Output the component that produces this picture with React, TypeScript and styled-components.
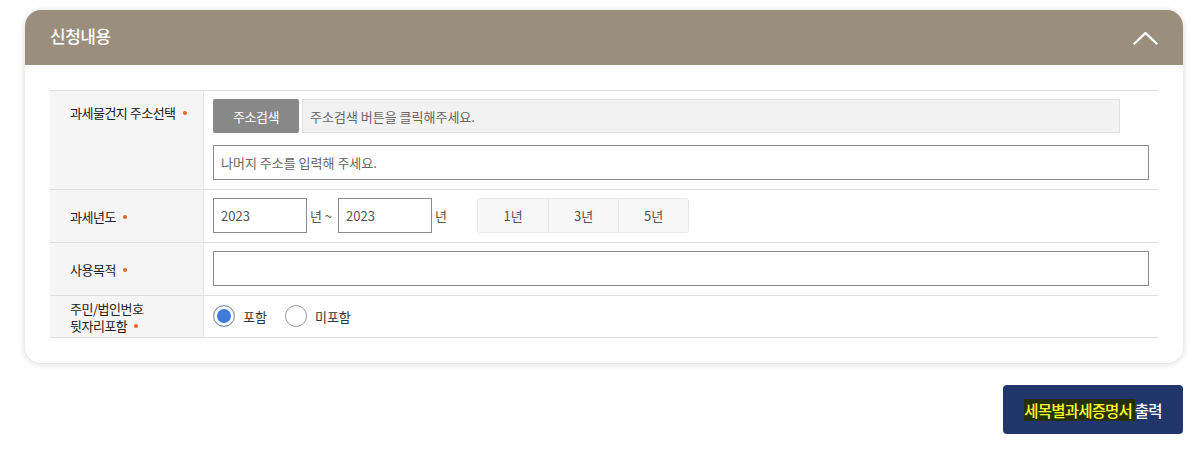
import React from "react";
import styled, { createGlobalStyle } from "styled-components";

const Global = createGlobalStyle`
  html, body { margin: 0; padding: 0; background: #fff; }
  body { font-family: "Noto Sans CJK KR", "Noto Sans", sans-serif; color: #333; }
  * { box-sizing: border-box; }
`;

const Page = styled.div`
  width: 1197px;
  padding: 10px 14px 0 25px;
  display: flex;
  flex-direction: column;
`;

const Card = styled.section`
  background: #fff;
  border-radius: 16px;
  box-shadow: 0 1px 6px rgba(0, 0, 0, 0.16);
  overflow: hidden;
`;

const Header = styled.header`
  height: 55px;
  background: #9a8f7d;
  display: flex;
  align-items: center;
  justify-content: space-between;
  padding: 0 25px 0 25px;
`;

const Title = styled.h2`
  margin: 0 0 4px 0;
  font-size: 17px;
  font-weight: 500;
  color: #fff;
  letter-spacing: -0.5px;
`;

const Body = styled.div`
  padding: 25px;
`;

const Table = styled.div`
  border-bottom: 1px solid #dedede;
`;

const Row = styled.div<{ $h: number }>`
  display: grid;
  grid-template-columns: 154px 1fr;
  height: ${(p) => p.$h}px;
  border-top: 1px solid #dedede;
`;

const Label = styled.div<{ $top?: boolean }>`
  background: #f5f5f5;
  border-right: 1px solid #e6e6e6;
  padding: ${(p) => (p.$top ? "13px 10px 0 20px" : "0 10px 0 20px")};
  display: flex;
  align-items: ${(p) => (p.$top ? "flex-start" : "center")};
  font-size: 13px;
  letter-spacing: -0.5px;
  line-height: 17px;
  color: #222;
`;

const Req = styled.span`
  display: inline-block;
  width: 4px;
  height: 4px;
  border-radius: 50%;
  background: #e8652b;
  margin-left: 7px;
  vertical-align: middle;
  position: relative;
  top: -1px;
`;

const Cell = styled.div<{ $col?: boolean }>`
  padding: 8px 9px 9px 9px;
  display: flex;
  flex-direction: ${(p) => (p.$col ? "column" : "row")};
  gap: ${(p) => (p.$col ? "12px" : "0")};
  align-items: ${(p) => (p.$col ? "stretch" : "center")};
`;

const Line = styled.div`
  display: flex;
  align-items: center;
  gap: 3px;
`;

const GrayButton = styled.button`
  width: 86px;
  height: 34px;
  border: none;
  border-radius: 2px;
  background: #888888;
  color: #fff;
  font-family: inherit;
  font-size: 13px;
  letter-spacing: -0.5px;
  padding: 0;
`;

const Input = styled.input<{ $w?: number; $ro?: boolean }>`
  width: ${(p) => (p.$w ? `${p.$w}px` : "100%")};
  height: ${(p) => (p.$ro ? 34 : 35)}px;
  border: 1px solid ${(p) => (p.$ro ? "#e0e0e0" : "#8c8c8c")};
  background: ${(p) => (p.$ro ? "#f2f2f2" : "#fff")};
  padding: 0 7px;
  font-family: inherit;
  font-size: 13px;
  color: #555;
  outline: none;
  &::placeholder { color: #666; }
`;

const Unit = styled.span<{ $ml?: number; $mr?: number }>`
  font-size: 13px;
  color: #555;
  margin: 0 ${(p) => p.$mr ?? 0}px 0 ${(p) => p.$ml ?? 0}px;
  white-space: pre;
`;

const Segments = styled.div`
  display: flex;
  margin-left: 30px;
  border: 1px solid #e6e6e6;
  border-radius: 3px;
  overflow: hidden;
`;

const Segment = styled.button`
  width: 70px;
  height: 33px;
  border: none;
  border-left: 1px solid #e6e6e6;
  background: #f7f7f7;
  font-family: inherit;
  font-size: 13px;
  color: #555;
  padding: 0;
  &:first-child { border-left: none; }
`;

const RadioLabel = styled.label`
  display: flex;
  align-items: center;
  gap: 8px;
  margin-right: 18px;
  font-size: 13px;
  color: #333;
`;

const RadioDot = styled.span<{ $on?: boolean }>`
  width: 22px;
  height: 22px;
  border-radius: 50%;
  border: 1px solid #9a9a9a;
  background: ${(p) => (p.$on ? "#3f7bd9" : "#fff")};
  box-shadow: ${(p) => (p.$on ? "inset 0 0 0 3px #fff" : "none")};
`;

const Footer = styled.div`
  display: flex;
  justify-content: flex-end;
  padding-top: 22px;
`;

const PrintButton = styled.button`
  width: 180px;
  height: 49px;
  border: none;
  border-radius: 4px;
  background: #21366a;
  color: #fff;
  font-family: inherit;
  font-size: 15.5px;
  font-weight: 500;
  letter-spacing: -0.8px;
  padding: 0;
`;

const Mark = styled.mark`
  background: #262f0c;
  color: #ffff2e;
`;

const Chevron = () => (
  <svg width="25" height="14" viewBox="0 0 25 14" fill="none">
    <polyline points="1.5,12.5 12.5,2 23.5,12.5" stroke="#fff" strokeWidth="2.4" strokeLinecap="round" strokeLinejoin="round" />
  </svg>
);

export default function App() {
  return (
    <>
      <Global />
      <Page>
        <Card>
          <Header>
            <Title>신청내용</Title>
            <Chevron />
          </Header>
          <Body>
            <Table>
              <Row $h={99}>
                <Label $top>
                  <span>
                    과세물건지 주소선택<Req />
                  </span>
                </Label>
                <Cell $col>
                  <Line>
                    <GrayButton>주소검색</GrayButton>
                    <Input $ro $w={818} readOnly placeholder="주소검색 버튼을 클릭해주세요." />
                  </Line>
                  <Input placeholder="나머지 주소를 입력해 주세요." />
                </Cell>
              </Row>
              <Row $h={53}>
                <Label>
                  <span>
                    과세년도<Req />
                  </span>
                </Label>
                <Cell>
                  <Input $w={94} defaultValue="2023" />
                  <Unit $ml={3} $mr={6}>년 ~</Unit>
                  <Input $w={94} defaultValue="2023" />
                  <Unit $ml={3}>년</Unit>
                  <Segments>
                    <Segment>1년</Segment>
                    <Segment>3년</Segment>
                    <Segment>5년</Segment>
                  </Segments>
                </Cell>
              </Row>
              <Row $h={53}>
                <Label>
                  <span>
                    사용목적<Req />
                  </span>
                </Label>
                <Cell>
                  <Input />
                </Cell>
              </Row>
              <Row $h={42}>
                <Label>
                  <span>
                    주민/법인번호
                    <br />
                    뒷자리포함<Req />
                  </span>
                </Label>
                <Cell>
                  <RadioLabel>
                    <RadioDot $on />
                    포함
                  </RadioLabel>
                  <RadioLabel>
                    <RadioDot />
                    미포함
                  </RadioLabel>
                </Cell>
              </Row>
            </Table>
          </Body>
        </Card>
        <Footer>
          <PrintButton>
            <Mark>세목별과세증명서 </Mark>출력
          </PrintButton>
        </Footer>
      </Page>
    </>
  );
}
